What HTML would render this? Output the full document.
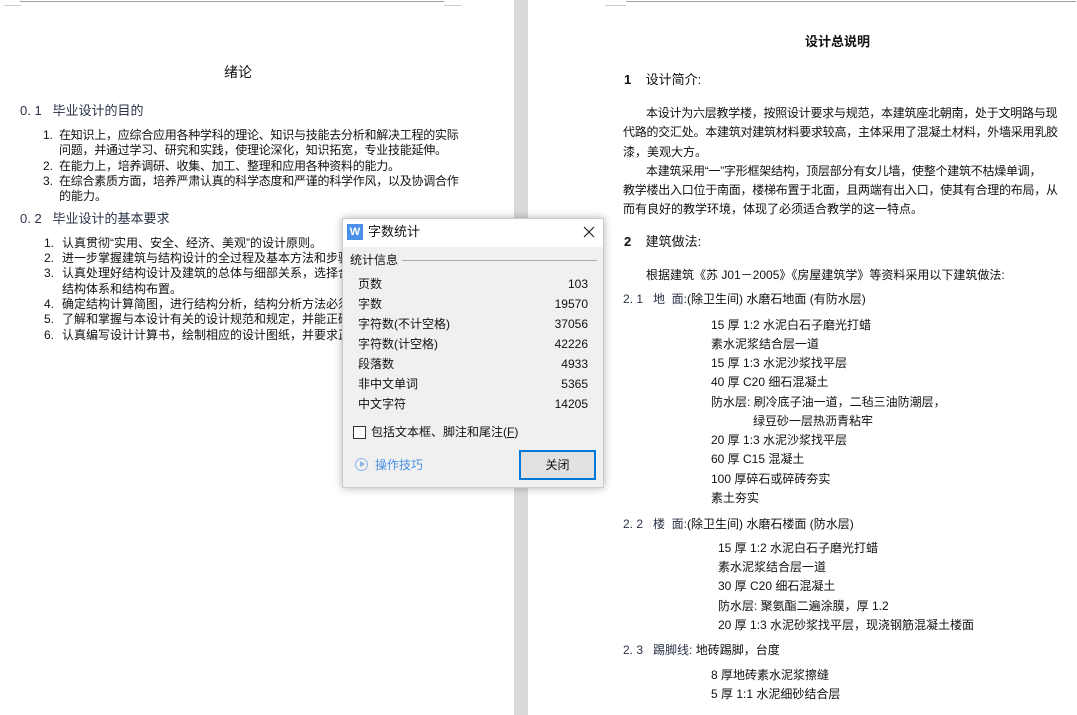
<!DOCTYPE html>
<html><head><meta charset="utf-8"><style>
*{margin:0;padding:0;box-sizing:border-box}
body{width:1077px;height:715px;position:relative;overflow:hidden;background:#fff;font-family:"Liberation Sans","Noto Sans CJK SC",sans-serif;color:#111;font-size:12px}
.t{position:absolute;white-space:nowrap;line-height:16px}
.h{font-size:13px}
.b{color:#2a3347}
.n{letter-spacing:-0.25px}
.gap{position:absolute;left:514px;top:0;width:14px;height:715px;background:#d9dadc}
.ln{position:absolute;background:#a0a0a0;height:1px}
.dlg{position:absolute;left:342px;top:218px;width:262px;height:270px;background:#f0f0f0;box-shadow:0 0 8px rgba(0,0,0,.3);border:1px solid #ccc}
.tb{position:absolute;left:0;top:0;width:260px;height:28px;background:#fff}
.r{position:absolute;left:15px;width:230px;line-height:16px;font-size:12px}
.r span{float:right}
</style></head><body>
<div class="gap"></div>
<div class="ln" style="left:20px;top:1px;width:424px"></div>
<div class="ln" style="left:4px;top:5px;width:17px;background:#ccc"></div>
<div class="ln" style="left:444px;top:5px;width:17px;background:#ccc"></div>
<div class="ln" style="left:626px;top:1px;width:450px"></div>
<div class="ln" style="left:605px;top:5px;width:21px;background:#ccc"></div>

<div class="t" style="left:224px;top:64px;font-size:14px">绪论</div>
<div class="t h b" style="left:20px;top:103px">0. 1&nbsp;&nbsp;&nbsp;毕业设计的目的</div>
<div class="t" style="left:43px;top:127px">1.</div><div class="t n" style="left:59px;top:127px">在知识上，应综合应用各种学科的理论、知识与技能去分析和解决工程的实际</div>
<div class="t n" style="left:59px;top:142px">问题，并通过学习、研究和实践，使理论深化，知识拓宽，专业技能延伸。</div>
<div class="t" style="left:43px;top:158px">2.</div><div class="t n" style="left:59px;top:158px">在能力上，培养调研、收集、加工、整理和应用各种资料的能力。</div>
<div class="t" style="left:43px;top:173px">3.</div><div class="t n" style="left:59px;top:173px">在综合素质方面，培养严肃认真的科学态度和严谨的科学作风，以及协调合作</div>
<div class="t" style="left:59px;top:188px">的能力。</div>
<div class="t h b" style="left:20px;top:211px">0. 2&nbsp;&nbsp;&nbsp;毕业设计的基本要求</div>
<div class="t" style="left:44px;top:235px">1.</div><div class="t" style="left:62px;top:235px">认真贯彻“实用、安全、经济、美观”的设计原则。</div>
<div class="t" style="left:44px;top:250px">2.</div><div class="t" style="left:62px;top:250px">进一步掌握建筑与结构设计的全过程及基本方法和步骤</div>
<div class="t" style="left:44px;top:265px">3.</div><div class="t" style="left:62px;top:265px">认真处理好结构设计及建筑的总体与细部关系，选择合</div>
<div class="t" style="left:62px;top:281px">结构体系和结构布置。</div>
<div class="t" style="left:44px;top:296px">4.</div><div class="t" style="left:62px;top:296px">确定结构计算简图，进行结构分析，结构分析方法必须</div>
<div class="t" style="left:44px;top:311px">5.</div><div class="t" style="left:62px;top:311px">了解和掌握与本设计有关的设计规范和规定，并能正确</div>
<div class="t" style="left:44px;top:327px">6.</div><div class="t" style="left:62px;top:327px">认真编写设计计算书，绘制相应的设计图纸，并要求正</div>

<div class="t" style="left:805px;top:34px;font-size:13px;font-weight:bold">设计总说明</div>
<div class="t h" style="left:624px;top:72px"><b>1</b>&nbsp;&nbsp;&nbsp;&nbsp;设计简介:</div>
<div class="t n" style="left:646px;top:105px">本设计为六层教学楼，按照设计要求与规范，本建筑座北朝南，处于文明路与现</div>
<div class="t n" style="left:623px;top:124px">代路的交汇处。本建筑对建筑材料要求较高，主体采用了混凝土材料，外墙采用乳胶</div>
<div class="t" style="left:623px;top:144px">漆，美观大方。</div>
<div class="t n" style="left:646px;top:163px">本建筑采用“一”字形框架结构，顶层部分有女儿墙，使整个建筑不枯燥单调，</div>
<div class="t n" style="left:623px;top:182px">教学楼出入口位于南面，楼梯布置于北面，且两端有出入口，使其有合理的布局，从</div>
<div class="t" style="left:623px;top:201px">而有良好的教学环境，体现了必须适合教学的这一特点。</div>
<div class="t h" style="left:624px;top:234px"><b>2</b>&nbsp;&nbsp;&nbsp;&nbsp;建筑做法:</div>
<div class="t" style="left:646px;top:267px">根据建筑《苏 J01－2005》《房屋建筑学》等资料采用以下建筑做法:</div>
<div class="t" style="left:623px;top:291px"><span class="b">2. 1&nbsp;&nbsp;&nbsp;地&nbsp;&nbsp;面:</span>(除卫生间) 水磨石地面 (有防水层)</div>
<div class="t" style="left:711px;top:317px">15 厚 1:2 水泥白石子磨光打蜡</div>
<div class="t" style="left:711px;top:336px">素水泥浆结合层一道</div>
<div class="t" style="left:711px;top:355px">15 厚 1:3 水泥沙浆找平层</div>
<div class="t" style="left:711px;top:374px">40 厚 C20 细石混凝土</div>
<div class="t" style="left:711px;top:394px">防水层: 刷冷底子油一道，二毡三油防潮层，</div>
<div class="t" style="left:753px;top:413px">绿豆砂一层热沥青粘牢</div>
<div class="t" style="left:711px;top:432px">20 厚 1:3 水泥沙浆找平层</div>
<div class="t" style="left:711px;top:451px">60 厚 C15 混凝土</div>
<div class="t" style="left:711px;top:471px">100 厚碎石或碎砖夯实</div>
<div class="t" style="left:711px;top:490px">素土夯实</div>
<div class="t" style="left:623px;top:516px"><span class="b">2. 2&nbsp;&nbsp;&nbsp;楼&nbsp;&nbsp;面:</span>(除卫生间) 水磨石楼面 (防水层)</div>
<div class="t" style="left:718px;top:540px">15 厚 1:2 水泥白石子磨光打蜡</div>
<div class="t" style="left:718px;top:559px">素水泥浆结合层一道</div>
<div class="t" style="left:718px;top:578px">30 厚 C20 细石混凝土</div>
<div class="t" style="left:718px;top:598px">防水层: 聚氨酯二遍涂膜，厚 1.2</div>
<div class="t" style="left:718px;top:617px">20 厚 1:3 水泥砂浆找平层，现浇钢筋混凝土楼面</div>
<div class="t" style="left:623px;top:642px"><span class="b">2. 3&nbsp;&nbsp;&nbsp;踢脚线:</span> 地砖踢脚，台度</div>
<div class="t" style="left:711px;top:667px">8 厚地砖素水泥浆擦缝</div>
<div class="t" style="left:711px;top:686px">5 厚 1:1 水泥细砂结合层</div>

<div class="dlg">
 <div class="tb">
  <div style="position:absolute;left:4px;top:5px;width:16px;height:16px;background:#4a8fe8;color:#fff;font-size:11px;line-height:16px;text-align:center;font-weight:bold">W</div>
  <div class="t" style="left:25px;top:5px;font-size:13px">字数统计</div>
  <svg style="position:absolute;left:240px;top:7px" width="12" height="12"><path d="M1 1L11 11M11 1L1 11" stroke="#222" stroke-width="1.2"/></svg>
 </div>
 <div class="t" style="left:7px;top:33px">统计信息</div>
 <div class="ln" style="left:59px;top:41px;width:195px;background:#aaa"></div>
 <div class="r" style="top:57px">页数<span>103</span></div>
 <div class="r" style="top:77px">字数<span>19570</span></div>
 <div class="r" style="top:97px">字符数(不计空格)<span>37056</span></div>
 <div class="r" style="top:117px">字符数(计空格)<span>42226</span></div>
 <div class="r" style="top:137px">段落数<span>4933</span></div>
 <div class="r" style="top:157px">非中文单词<span>5365</span></div>
 <div class="r" style="top:177px">中文字符<span>14205</span></div>
 <div style="position:absolute;left:10px;top:207px;width:13px;height:13px;border:1px solid #333;background:#fff"></div>
 <div class="t" style="left:28px;top:205px">包括文本框、脚注和尾注(<u>F</u>)</div>
 <div style="position:absolute;left:12px;top:239px;width:13px;height:13px;border:1px solid #8ab4e8;border-radius:50%"></div>
 <div style="position:absolute;left:17px;top:242px;width:0;height:0;border-left:5px solid #8ab4e8;border-top:3.5px solid transparent;border-bottom:3.5px solid transparent"></div>
 <div class="t" style="left:32px;top:238px;color:#4a90e2">操作技巧</div>
 <div style="position:absolute;left:176px;top:231px;width:77px;height:30px;border:2px solid #0078d7;background:#e1e1e1;text-align:center;line-height:26px">关闭</div>
</div>
</body></html>
